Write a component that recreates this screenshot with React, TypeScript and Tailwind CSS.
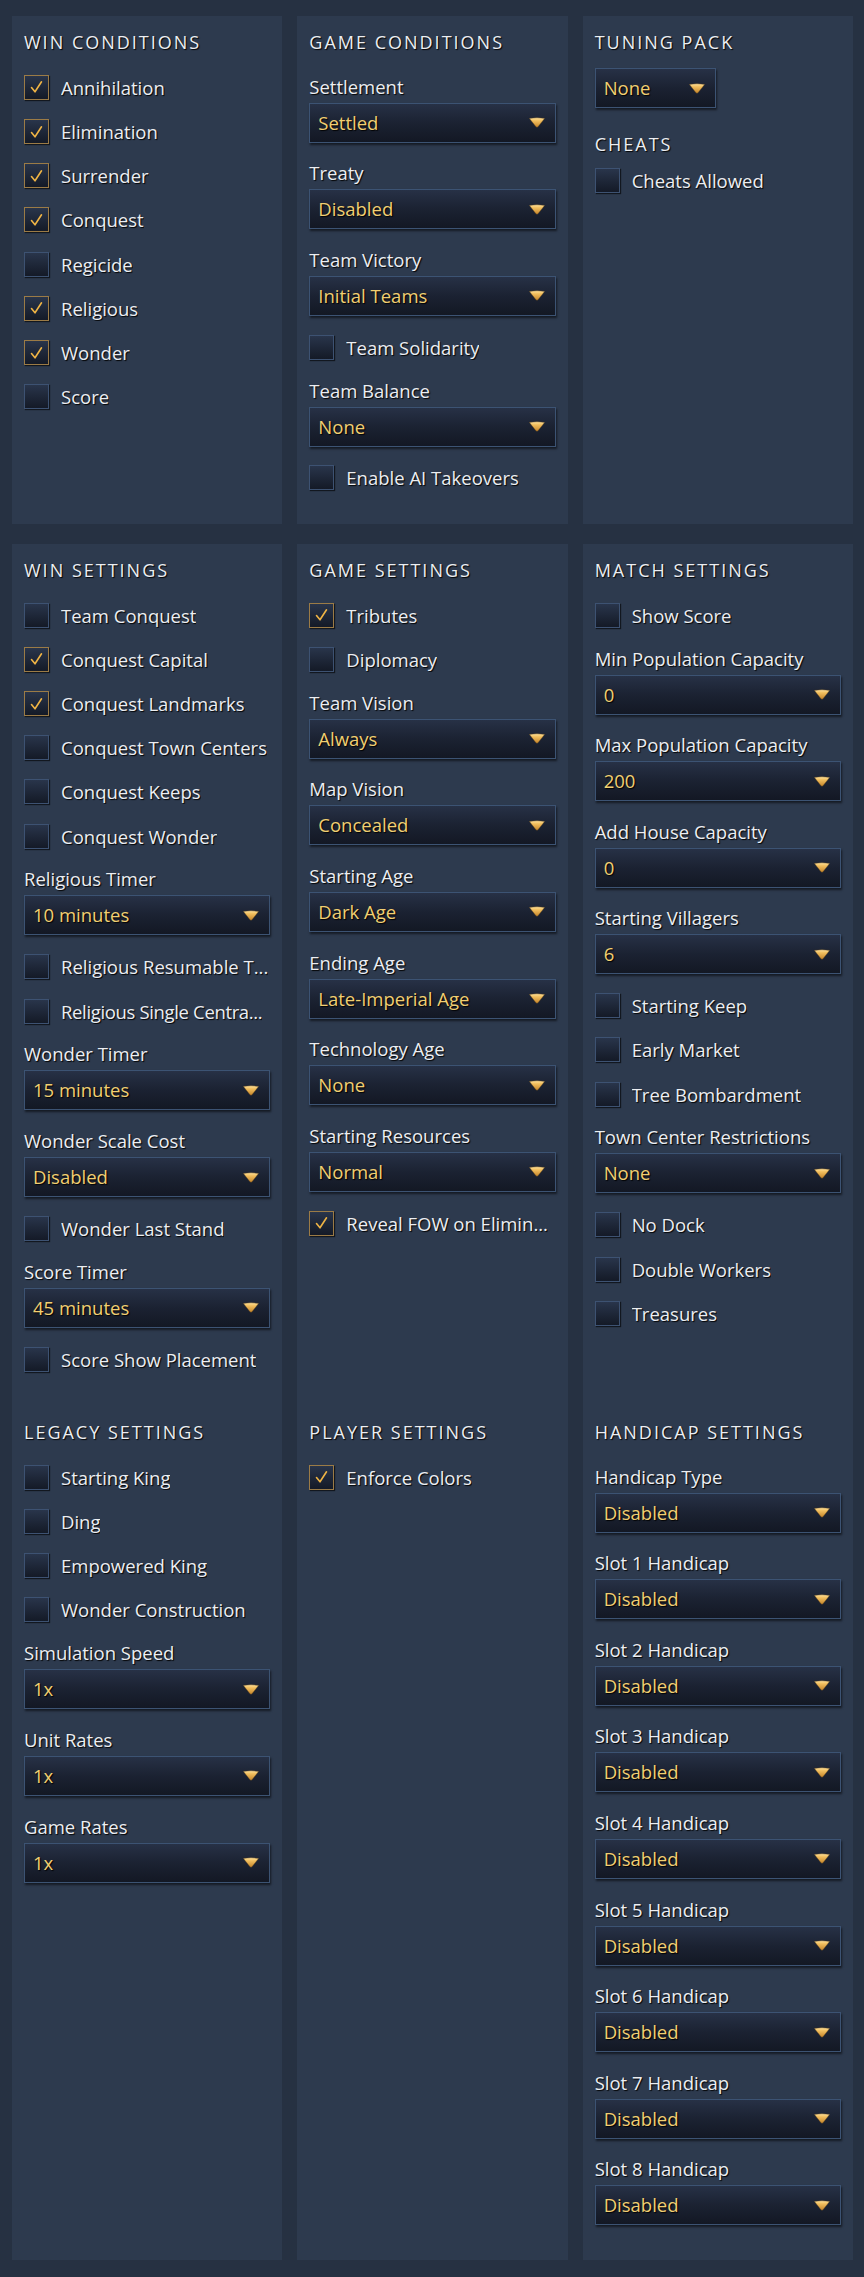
import React from "react";

const shadow = "[text-shadow:1px_1px_1px_rgba(0,0,0,0.95)]";

function Arrow() {
  return (
    <svg width="16" height="11" viewBox="0 0 16 11" className="shrink-0">
      <defs>
        <linearGradient id="arrowGrad" x1="0" y1="0" x2="0" y2="1">
          <stop offset="0" stopColor="#ffe3a0" />
          <stop offset="0.3" stopColor="#f2c060" />
          <stop offset="1" stopColor="#c4842a" />
        </linearGradient>
      </defs>
      <path d="M0.4 1.4 Q8 0.2 15.6 1.4 L9.2 9.6 Q8 11 6.8 9.6 Z" fill="url(#arrowGrad)" stroke="#6b4a18" strokeWidth="0.4" />
    </svg>
  );
}

function Heading({ children }: { children: React.ReactNode }) {
  return (
    <div className={`h-[26px] leading-[24px] text-[18px] tracking-[2px] uppercase text-[#eceef2] whitespace-nowrap ${shadow}`}>
      {children}
    </div>
  );
}

function Box({ checked }: { checked: boolean }) {
  return (
    <div
      className={`w-[25px] h-[25px] shrink-0 border-[1.5px] bg-linear-to-b from-[#29354b] to-[#141a27] shadow-[1px_1px_1px_rgba(0,0,0,0.6)] flex items-center justify-center ${
        checked ? "border-[#9b7b46]" : "border-[#3d5272]"
      }`}
    >
      {checked && (
        <svg width="22" height="22" viewBox="0 0 22 22">
          <path d="M5.5 11.5 L9 15.8 L15.5 5.8" fill="none" stroke="#efb445" strokeWidth="1.6" strokeLinecap="round" strokeLinejoin="round" />
        </svg>
      )}
    </div>
  );
}

function Check({ label, checked = false, tight = false }: { label: string; checked?: boolean; tight?: boolean }) {
  return (
    <div className="flex items-center h-[25.6px] gap-[12px] min-w-0">
      <Box checked={checked} />
      <span
        className={`text-[18.5px] leading-[25px] text-[#eceef2] whitespace-nowrap overflow-hidden text-ellipsis min-w-0 ${
          tight ? "tracking-[-0.35px]" : ""
        } ${shadow}`}
      >
        {label}
      </span>
    </div>
  );
}

function Dropdown({ value, narrow = false }: { value: string; narrow?: boolean }) {
  return (
    <div
      className={`h-[40px] ${narrow ? "w-[121px]" : "w-full"} border-[1.5px] border-[#3c5373] bg-linear-to-b from-[#273146] via-[#1b2232] to-[#131824] shadow-[1px_2px_2px_rgba(0,0,0,0.55)] flex items-center justify-between pl-[8px] pr-[10px]`}
    >
      <span className={`text-[18.5px] leading-[24px] text-[#f1cf72] whitespace-nowrap ${shadow}`}>{value}</span>
      <Arrow />
    </div>
  );
}

function Select({ label, value }: { label: string; value: string }) {
  return (
    <div className="flex flex-col">
      <div className={`h-[24px] leading-[24px] mb-[4px] text-[18.5px] text-[#eceef2] whitespace-nowrap ${shadow}`}>{label}</div>
      <Dropdown value={value} />
    </div>
  );
}

function Section({ title, children }: { title: string; children: React.ReactNode }) {
  return (
    <div className="flex flex-col gap-[18.6px]">
      <Heading>{title}</Heading>
      {children}
    </div>
  );
}

export default function App() {
  return (
    <div className="min-h-[2277px] w-[864px] bg-[#263142] pt-[16px] pb-[16px] pl-[12px] pr-[11px] font-['Open_Sans','Noto_Sans',sans-serif]">
      {/* Row 1 */}
      <div className="grid grid-cols-3 gap-x-[15px]">
        <div className="bg-[#2d3a4e] px-[12px] pt-[14px] pb-[33px] min-w-0">
          <Section title="Win Conditions">
            <Check label="Annihilation" checked />
            <Check label="Elimination" checked />
            <Check label="Surrender" checked />
            <Check label="Conquest" checked />
            <Check label="Regicide" />
            <Check label="Religious" checked />
            <Check label="Wonder" checked />
            <Check label="Score" />
          </Section>
        </div>
        <div className="bg-[#2d3a4e] px-[12px] pt-[14px] pb-[33px] min-w-0">
          <Section title="Game Conditions">
            <Select label="Settlement" value="Settled" />
            <Select label="Treaty" value="Disabled" />
            <Select label="Team Victory" value="Initial Teams" />
            <Check label="Team Solidarity" />
            <Select label="Team Balance" value="None" />
            <Check label="Enable AI Takeovers" />
          </Section>
        </div>
        <div className="bg-[#2d3a4e] px-[12px] pt-[14px] pb-[33px] min-w-0 flex flex-col">
          <Heading>Tuning Pack</Heading>
          <div className="mt-[12px]">
            <Dropdown value="None" narrow />
          </div>
          <div className="mt-[24px]">
            <Heading>Cheats</Heading>
          </div>
          <div className="mt-[10px]">
            <Check label="Cheats Allowed" />
          </div>
        </div>
      </div>

      {/* Row 2 */}
      <div className="mt-[20px] grid grid-cols-3 gap-x-[15px] gap-y-0">
        <div className="bg-[#2d3a4e] px-[12px] pt-[14px] pb-[34px] min-w-0">
          <Section title="Win Settings">
            <Check label="Team Conquest" />
            <Check label="Conquest Capital" checked />
            <Check label="Conquest Landmarks" checked />
            <Check label="Conquest Town Centers" />
            <Check label="Conquest Keeps" />
            <Check label="Conquest Wonder" />
            <Select label="Religious Timer" value="10 minutes" />
            <Check label="Religious Resumable T..." />
            <Check label="Religious Single Centra..." tight />
            <Select label="Wonder Timer" value="15 minutes" />
            <Select label="Wonder Scale Cost" value="Disabled" />
            <Check label="Wonder Last Stand" />
            <Select label="Score Timer" value="45 minutes" />
            <Check label="Score Show Placement" />
          </Section>
        </div>
        <div className="bg-[#2d3a4e] px-[12px] pt-[14px] pb-[34px] min-w-0">
          <Section title="Game Settings">
            <Check label="Tributes" checked />
            <Check label="Diplomacy" />
            <Select label="Team Vision" value="Always" />
            <Select label="Map Vision" value="Concealed" />
            <Select label="Starting Age" value="Dark Age" />
            <Select label="Ending Age" value="Late-Imperial Age" />
            <Select label="Technology Age" value="None" />
            <Select label="Starting Resources" value="Normal" />
            <Check label="Reveal FOW on Elimin..." checked />
          </Section>
        </div>
        <div className="bg-[#2d3a4e] px-[12px] pt-[14px] pb-[34px] min-w-0">
          <Section title="Match Settings">
            <Check label="Show Score" />
            <Select label="Min Population Capacity" value="0" />
            <Select label="Max Population Capacity" value="200" />
            <Select label="Add House Capacity" value="0" />
            <Select label="Starting Villagers" value="6" />
            <Check label="Starting Keep" />
            <Check label="Early Market" />
            <Check label="Tree Bombardment" />
            <Select label="Town Center Restrictions" value="None" />
            <Check label="No Dock" />
            <Check label="Double Workers" />
            <Check label="Treasures" />
          </Section>
        </div>

        <div className="bg-[#2d3a4e] px-[12px] pt-[14px] pb-[35px] min-w-0">
          <Section title="Legacy Settings">
            <Check label="Starting King" />
            <Check label="Ding" />
            <Check label="Empowered King" />
            <Check label="Wonder Construction" />
            <Select label="Simulation Speed" value="1x" />
            <Select label="Unit Rates" value="1x" />
            <Select label="Game Rates" value="1x" />
          </Section>
        </div>
        <div className="bg-[#2d3a4e] px-[12px] pt-[14px] pb-[35px] min-w-0">
          <Section title="Player Settings">
            <Check label="Enforce Colors" checked />
          </Section>
        </div>
        <div className="bg-[#2d3a4e] px-[12px] pt-[14px] pb-[35px] min-w-0">
          <Section title="Handicap Settings">
            <Select label="Handicap Type" value="Disabled" />
            <Select label="Slot 1 Handicap" value="Disabled" />
            <Select label="Slot 2 Handicap" value="Disabled" />
            <Select label="Slot 3 Handicap" value="Disabled" />
            <Select label="Slot 4 Handicap" value="Disabled" />
            <Select label="Slot 5 Handicap" value="Disabled" />
            <Select label="Slot 6 Handicap" value="Disabled" />
            <Select label="Slot 7 Handicap" value="Disabled" />
            <Select label="Slot 8 Handicap" value="Disabled" />
          </Section>
        </div>
      </div>
    </div>
  );
}
